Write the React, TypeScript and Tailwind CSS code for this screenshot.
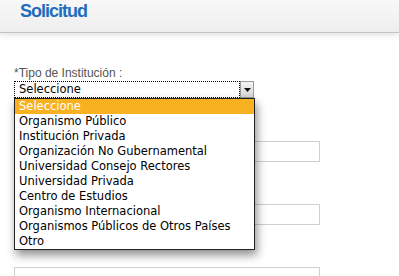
const options = [
  'Seleccione',
  'Organismo Público',
  'Institución Privada',
  'Organización No Gubernamental',
  'Universidad Consejo Rectores',
  'Universidad Privada',
  'Centro de Estudios',
  'Organismo Internacional',
  'Organismos Públicos de Otros Países',
  'Otro',
]

export default function App() {
  return (
    <div className="min-h-screen bg-white overflow-hidden" style={{ width: 399, height: 276 }}>
      {/* Header */}
      <header className="h-[33px] bg-gradient-to-b from-[#f8f8f8] to-[#eeeeee] border-b border-[#c4c4c4] shadow-[0_2px_6px_rgba(0,0,0,0.12)]">
        <h1 className="pl-[20px] text-[18px] leading-[22px] font-bold tracking-[-1px] text-[#1f6dbd] font-['Liberation_Sans',Arial,sans-serif]">
          Solicitud
        </h1>
      </header>

      {/* Form */}
      <main className="px-[14px] pt-[33px]">
        <label className="block text-[12px] leading-[14px] text-[#555] font-['Liberation_Sans',Arial,sans-serif]">
          *Tipo de Institución :
        </label>

        <div className="relative mt-[1px] w-[240px]">
          <div className="flex h-[17px]">
            <div className="flex-1 border border-dotted border-black bg-white flex items-center pl-[4px] text-[11.5px] leading-[15px] text-black font-['DejaVu_Sans',Verdana,sans-serif]">
              Seleccione
            </div>
            <div className="w-[14px] bg-gradient-to-b from-[#f4f4f4] to-[#d6d6d6] border border-[#9a9a9a] flex items-center justify-center">
              <svg width="7" height="4" viewBox="0 0 7 4">
                <path d="M0 0h7L3.5 4z" fill="#111" />
              </svg>
            </div>
          </div>

          {/* Open dropdown list */}
          <ul className="absolute left-0 top-[17px] z-10 w-[241px] bg-white border border-[#222] shadow-[2px_5px_9px_rgba(0,0,0,0.45)] font-['DejaVu_Sans',Verdana,sans-serif] text-[11.5px] leading-[15px] text-black">
            {options.map((o, i) => (
              <li
                key={o}
                className={i === 0 ? 'h-[15px] pl-[4px] bg-[#f8b121] text-white' : 'h-[15px] pl-[4px]'}
              >
                {o}
              </li>
            ))}
          </ul>
        </div>

        <div className="mt-[43px] h-[21px] w-[306px] border border-[#cfcfcf] bg-white" />
        <div className="mt-[42px] h-[21px] w-[306px] border border-[#cfcfcf] bg-white" />
        <div className="mt-[42px] h-[21px] w-[306px] border border-[#cfcfcf] bg-white" />
      </main>
    </div>
  )
}
